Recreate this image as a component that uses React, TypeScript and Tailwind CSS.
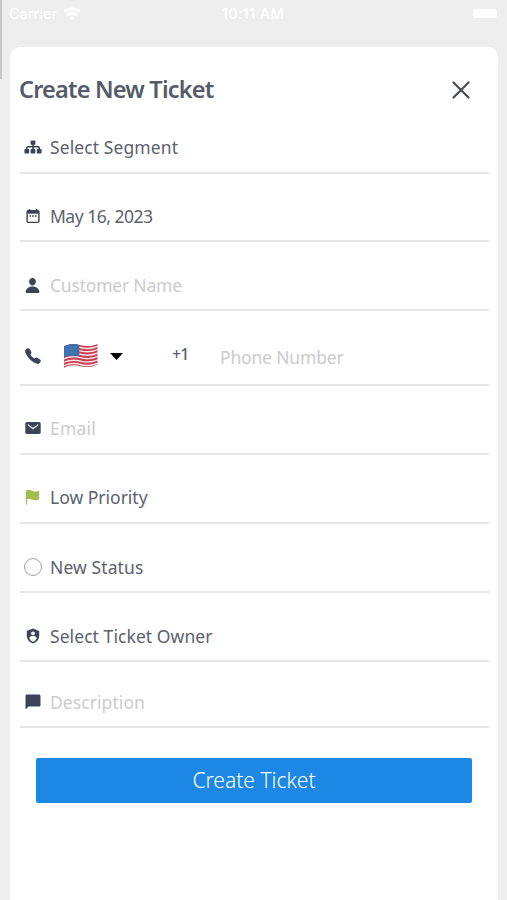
import type { ReactNode } from 'react';
import { IoPerson, IoCall } from 'react-icons/io5';
import { MdChatBubble } from 'react-icons/md';

interface FieldRowProps {
  icon: ReactNode;
  label: string;
  placeholder?: boolean;
  className: string;
  textClass?: string;
}

function FieldRow({ icon, label, placeholder, className, textClass = '' }: FieldRowProps) {
  return (
    <div className={`flex items-end border-b-2 border-[#e6e6e6] ${className}`}>
      <div className="flex h-6 w-[25px] items-center justify-center text-[#3b4458]">{icon}</div>
      <span
        className={`ml-[5px] h-6 text-[17.5px] leading-6 whitespace-nowrap ${placeholder ? 'text-[#cbcbcd]' : 'text-[#5c616b]'} ${textClass}`}
      >
        {label}
      </span>
    </div>
  );
}

function WifiIcon() {
  return (
    <svg width="18" height="14" viewBox="0 0 18 14" fill="none" stroke="white" strokeWidth="2.8">
      <path d="M1.4 5C5.7.9 12.3.9 16.6 5" />
      <path d="M4.2 8.2C7 5.6 11 5.6 13.8 8.2" />
      <path d="M9 13.2 6.3 10.4C7.9 9.1 10.1 9.1 11.7 10.4Z" fill="white" stroke="none" />
    </svg>
  );
}

function SegmentIcon() {
  return (
    <svg width="18" height="14" viewBox="0 0 18 14" fill="currentColor">
      <rect x="6.6" y="0.6" width="4.8" height="4.2" rx="0.9" />
      <rect x="0.4" y="9" width="4.8" height="4.4" rx="1" />
      <rect x="6.6" y="9" width="4.8" height="4.4" rx="1" />
      <rect x="12.8" y="9" width="4.8" height="4.4" rx="1" />
      <path d="M9 4v6M2.8 10V7.8q0-1 1-1h10.400q1 0 1 1V10" fill="none" stroke="currentColor" strokeWidth="1.600" />
    </svg>
  );
}

function CalendarIcon() {
  return (
    <svg width="14" height="16" viewBox="0 0 14 16" fill="none" stroke="currentColor">
      <rect x="1.1" y="2.6" width="11.8" height="11.8" rx="1.4" strokeWidth="1.4" />
      <path d="M1 4.2h12" strokeWidth="3" />
      <path d="M3.5 1v3M10.5 1v3" strokeWidth="1.6" />
      <path d="M3.5 8h7" strokeWidth="1.3" strokeDasharray="1.6 1.1" />
    </svg>
  );
}

function MailIcon() {
  return (
    <svg width="16" height="14" viewBox="0 0 16 14">
      <rect x="0.3" y="1" width="15.4" height="12" rx="1.700" fill="currentColor" />
      <path d="M3.200 4 8 7.600 12.800 4" fill="none" stroke="#e6e8ee" strokeWidth="1.300" strokeLinecap="round" />
    </svg>
  );
}

function FlagIcon() {
  return (
    <svg width="15" height="16" viewBox="0 0 15 16" fill="#a5bd50">
      <path d="M.8 1.6C3.3.1 5 .7 6.8 1.700 9 2.800 11.300 2.600 14.200 2v8.800c-3 .7-5.300.5-7.400-.3-1.700-.7-3-.7-4.700-.2v5.200H.8z" />
    </svg>
  );
}

function OwnerIcon() {
  return (
    <svg width="14" height="16" viewBox="0 0 14 16">
      <path d="M7 .6 13.2 3v4.700c0 3.500-2.500 6.600-6.200 7.700C3.300 14.300.8 11.200.8 7.700V3z" fill="currentColor" />
      <circle cx="7" cy="5.300" r="1.900" fill="white" />
      <path d="M3.200 9.900C3.800 8.300 5.600 8 7 8s3.200.3 3.800 1.900C10 11.900 8.800 13.100 7 13.800 5.200 13.100 4 11.900 3.200 9.900Z" fill="white" />
    </svg>
  );
}

function UsFlag() {
  return (
    <svg width="36" height="26" viewBox="0 0 36 26">
      <defs>
        <clipPath id="wave">
          <path d="M1 3.500C7 .2 12 .9 18 2.200 24 3.500 29 3.300 34.500 1V21.500C29 24.300 24 24.500 18 23.200 12 22 7 21.700 1 24.800Z" />
        </clipPath>
      </defs>
      <g clipPath="url(#wave)">
        <rect width="36" height="26" fill="#f3e6e7" />
        <g fill="none" stroke="#cb3a4e" strokeWidth="1.900">
          <path d="M0 4.300C7 .900 12 1.300 18 2.900S29 4.200 36 1.100" />
          <path d="M0 7.700C7 4.300 12 4.700 18 6.300S29 7.600 36 4.500" />
          <path d="M0 11.100C7 7.700 12 8.100 18 9.700S29 11 36 7.900" />
          <path d="M0 14.500C7 11.100 12 11.500 18 13.100S29 14.400 36 11.300" />
          <path d="M0 17.900C7 14.500 12 14.900 18 16.500S29 17.800 36 14.700" />
          <path d="M0 21.300C7 17.900 12 18.300 18 19.900S29 21.200 36 18.100" />
          <path d="M0 24.700C7 21.300 12 21.700 18 23.300S29 24.600 36 21.500" />
        </g>
        <path d="M0 3C6 .6 11 .4 16.300 1.700V13.200C11 12 6 12.300 0 15Z" fill="#3d71ad" />
        <path d="M3 5c4-1.500 8-1.700 12-.9M3 8c4-1.500 8-1.700 12-.9M3 11c4-1.500 8-1.700 12-.9" stroke="#5f8bbd" strokeWidth=".8" strokeDasharray="1 1.500" fill="none" />
      </g>
    </svg>
  );
}

export default function App() {
  return (
    <div className="relative flex h-[900px] w-[507px] flex-col overflow-hidden bg-[#eeeeee] font-['Noto_Sans','Open_Sans',sans-serif]">
      {/* Scroll edge of the screen underneath */}
      <div className="absolute top-0 left-0 h-[79px] w-[2px] bg-[#c6c6c6]" />

      {/* Status bar */}
      <div className="grid h-[47px] shrink-0 grid-cols-3 items-start pr-[10px] pl-[9px] font-[Inter,sans-serif] text-[14.5px] text-white">
        <div className="flex h-7 items-center gap-[6px]">
          <span className="tracking-[0.1px]">Carrier</span>
          <WifiIcon />
        </div>
        <span className="flex h-7 items-center justify-center font-medium tracking-[0.4px]">10:11 AM</span>
        <div className="flex h-[26px] items-center justify-end">
          <div className="h-[9px] w-6 rounded-[3px] bg-white" />
        </div>
      </div>

      <div className="mr-[9px] ml-[10px] flex-1 rounded-t-[10px] bg-white pr-[9px] pl-[10px]">
        <div className="flex h-[85px] items-center justify-between pr-[19px]">
          <h1 className="-ml-px text-[23.5px] font-semibold tracking-[-0.8px] text-[#555b67]">Create New Ticket</h1>
          <svg width="18" height="18" viewBox="0 0 18 18" fill="none" stroke="#474c55" strokeWidth="2.200" strokeLinecap="round">
            <path d="m1.500 1.500 15 15m0-15-15 15" />
          </svg>
        </div>

        <FieldRow className="h-[42px] pb-[13px]" textClass="tracking-[0.1px]" label="Select Segment" icon={<SegmentIcon />} />
        <FieldRow className="h-[68px] pb-[12px]" textClass="tracking-[-0.5px]" label="May 16, 2023" icon={<CalendarIcon />} />
        <FieldRow
          className="h-[69px] pb-[12px]"
          textClass="tracking-[-0.2px]"
          label="Customer Name"
          placeholder
          icon={<IoPerson size={17} />}
        />

        {/* Phone */}
        <div className="flex h-[75px] items-end border-b-2 border-[#e6e6e6] pb-[15px]">
          <div className="flex h-[26px] w-[25px] items-center justify-center text-[#3b4458]">
            <IoCall size={18} />
          </div>
          <div className="ml-[18px] flex h-[26px] items-center">
            <UsFlag />
          </div>
          <div className="ml-[11px] flex h-[26px] items-center">
            <svg width="13" height="7" viewBox="0 0 13 7">
              <path d="M0 0h13L6.500 7z" />
            </svg>
          </div>
          <span className="ml-[49px] h-[27px] w-[48px] text-[16px] leading-6 font-medium tracking-[-0.8px] text-[#5c616b]">+1</span>
          <span className="h-6 text-[17.5px] leading-6 tracking-[-0.17px] text-[#cbcbcd]">Phone Number</span>
        </div>

        <FieldRow className="h-[69px] pb-[13px]" textClass="tracking-[0.2px]" label="Email" placeholder icon={<MailIcon />} />
        <FieldRow className="h-[69px] pb-[13px]" label="Low Priority" icon={<FlagIcon />} />
        <FieldRow
          className="h-[69px] pb-[12px]"
          textClass="tracking-[0.1px]"
          label="New Status"
          icon={<div className="size-[18px] rounded-full border-[1.5px] border-[#a0a2a6]" />}
        />
        <FieldRow className="h-[69px] pb-[12px]" textClass="tracking-[0.07px]" label="Select Ticket Owner" icon={<OwnerIcon />} />
        <FieldRow
          className="h-[66px] pb-[12px]"
          textClass="tracking-[0.07px]"
          label="Description"
          placeholder
          icon={<MdChatBubble size={18} />}
        />

        <button className="mt-[30px] ml-4 flex h-[45px] w-[436px] items-center justify-center rounded-[2px] bg-[#1c87e5] text-[21px] font-light text-white">
          Create Ticket
        </button>
      </div>
    </div>
  );
}
